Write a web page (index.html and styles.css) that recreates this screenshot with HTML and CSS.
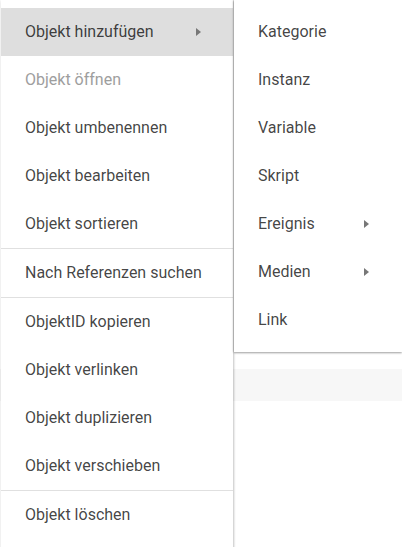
FILE: index.html
```html
<!DOCTYPE html>
<html lang="de">
<head>
<meta charset="utf-8">
<title>Kontextmenü</title>
<link rel="stylesheet" href="styles.css">
</head>
<body>
<div class="page">
  <div class="page-row"></div>
</div>
<ul class="menu main-menu">
  <li class="item active">Objekt hinzufügen<span class="arrow"></span></li>
  <li class="item disabled">Objekt öffnen</li>
  <li class="item">Objekt umbenennen</li>
  <li class="item">Objekt bearbeiten</li>
  <li class="item">Objekt sortieren</li>
  <li class="divider"></li>
  <li class="item">Nach Referenzen suchen</li>
  <li class="divider"></li>
  <li class="item">ObjektID kopieren</li>
  <li class="item">Objekt verlinken</li>
  <li class="item">Objekt duplizieren</li>
  <li class="item">Objekt verschieben</li>
  <li class="divider"></li>
  <li class="item">Objekt löschen</li>
</ul>
<ul class="menu sub-menu">
  <li class="item">Kategorie</li>
  <li class="item">Instanz</li>
  <li class="item">Variable</li>
  <li class="item">Skript</li>
  <li class="item">Ereignis<span class="arrow"></span></li>
  <li class="item">Medien<span class="arrow"></span></li>
  <li class="item">Link</li>
</ul>
</body>
</html>
```

FILE: styles.css
```css
html, body {
  margin: 0;
  padding: 0;
  background: #ffffff;
  font-family: Roboto, "Noto Sans", Arial, sans-serif;
  overflow: hidden;
  width: 402px;
  height: 547px;
}

.page {
  padding-top: 369px;
}

.page-row {
  height: 32px;
  background: #f7f7f7;
}

.menu {
  list-style: none;
  margin: 0;
  padding: 8px 0;
  background: #ffffff;
  position: absolute;
  top: 0;
  box-sizing: border-box;
}

.main-menu {
  left: 1px;
  width: 232px;
  height: 560px;
  box-shadow: 1px 0 2px rgba(0, 0, 0, 0.18), 0 1px 3px rgba(0, 0, 0, 0.12);
}

.sub-menu {
  left: 234px;
  width: 168px;
  box-shadow: 0 1px 2px rgba(0, 0, 0, 0.35), -1px 0 2px rgba(0, 0, 0, 0.12);
}

.item {
  height: 48px;
  box-sizing: border-box;
  display: flex;
  align-items: center;
  padding-left: 24px;
  padding-bottom: 2px;
  font-size: 16px;
  color: rgba(0, 0, 0, 0.74);
  position: relative;
  white-space: nowrap;
}

.item.active {
  background: #dedede;
}

.item.disabled {
  color: #9e9e9e;
}

.divider {
  height: 1px;
  background: #e0e0e0;
  margin: 0;
}

.arrow {
  position: absolute;
  top: 50%;
  margin-top: -4px;
  width: 0;
  height: 0;
  border-top: 4px solid transparent;
  border-bottom: 4px solid transparent;
  border-left: 5px solid #777777;
}

.main-menu .arrow {
  left: 195px;
}

.sub-menu .arrow {
  left: 130px;
}
```
